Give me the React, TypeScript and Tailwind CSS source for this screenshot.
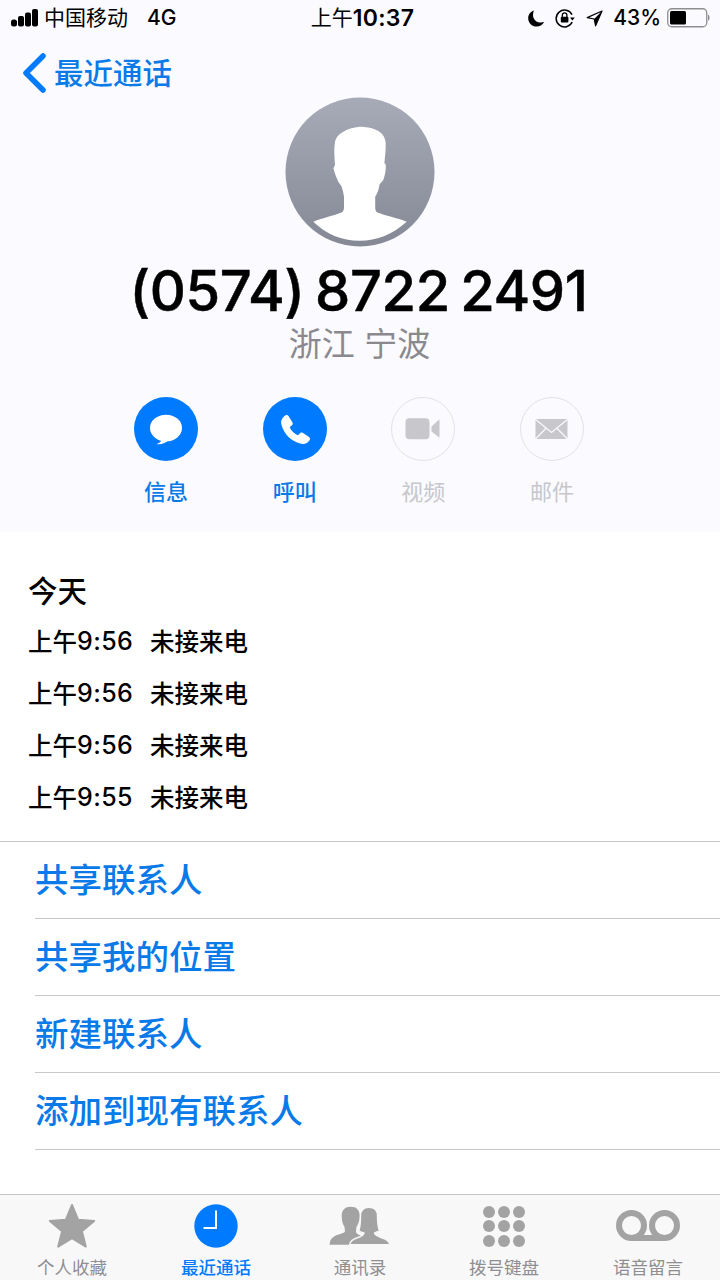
import React from "react";

const FONT = { fontFamily: '"Inter", "Noto Sans CJK SC", sans-serif' };

function Signal() {
  return (
    <svg width="28" height="18" viewBox="0 0 28 18" className="block">
      <rect x="0" y="10.5" width="6" height="7" rx="2.5" fill="#000" />
      <rect x="7" y="7" width="6" height="10.5" rx="2" fill="#000" />
      <rect x="14" y="3.5" width="6" height="14" rx="2" fill="#000" />
      <rect x="21" y="0" width="6" height="17.5" rx="2" fill="#000" />
    </svg>
  );
}

function Moon() {
  return (
    <svg width="17" height="17" viewBox="0 0 17 17" className="block">
      <path d="M6 0.5 C2.4 1.6 0.2 4.6 0.2 8.2 C0.2 12.9 4 16.6 8.6 16.6 C12 16.6 14.8 14.7 16.2 11.8 C15.2 12.3 14 12.6 12.8 12.6 C8.6 12.6 5 9.2 5 4.9 C5 3.2 5.3 1.8 6 0.5 Z" fill="#000" />
    </svg>
  );
}

function RotationLock() {
  return (
    <svg width="20" height="20" viewBox="0 0 20 20" className="block">
      <path d="M17 6.6 A8.4 8.4 0 1 0 17.2 14" fill="none" stroke="#000" strokeWidth="1.5" />
      <path d="M15 9.4 L19.8 9.4 L17.4 12.4 Z" fill="#000" />
      <rect x="5.8" y="8.8" width="7.6" height="5.8" rx="1" fill="#000" />
      <path d="M7.3 9 V7.2 A2.3 2.3 0 0 1 11.9 7.2 V9" fill="none" stroke="#000" strokeWidth="1.3" />
    </svg>
  );
}

function LocationArrow() {
  return (
    <svg width="17" height="17" viewBox="0 0 17 17" className="block">
      <path d="M16 1 L1.2 7.6 L8.2 9 L9.6 15.8 Z" fill="none" stroke="#000" strokeWidth="1.2" strokeLinejoin="round" />
      <path d="M16 1 L8.2 9 L9.6 15.8 Z" fill="#000" />
    </svg>
  );
}

function Battery() {
  return (
    <svg width="43" height="20" viewBox="0 0 43 20" className="block">
      <rect x="0.75" y="0.75" width="39" height="18" rx="4" fill="none" stroke="#8e8e8e" strokeWidth="1.3" />
      <rect x="3" y="3" width="16" height="13.6" rx="1.5" fill="#000" />
      <path d="M41 6.5 C42 7 42.6 8.5 42.6 9.8 C42.6 11 42 12.4 41 13 Z" fill="#8e8e8e" />
    </svg>
  );
}

function Avatar() {
  return (
    <svg width="150" height="150" viewBox="0 0 150 150" className="block">
      <defs>
        <linearGradient id="av" x1="0" y1="0" x2="0" y2="1">
          <stop offset="0" stopColor="#a7abb8" />
          <stop offset="1" stopColor="#858995" />
        </linearGradient>
      </defs>
      <circle cx="75" cy="75" r="74.5" fill="url(#av)" />
      <path
        d="M74.5 29.7 C86 30 100 33 100.7 46 C100.9 53 100 60 99.4 66 L100.9 68 C100.9 74 99.8 79 98.3 83 L94.5 87.5 C94 92 92.5 96.5 90.2 99.7 L90.2 110 C90.2 113 90.8 114.5 92.5 115.5 C100 118.5 112 121 121.7 124.7 C108 137 92 143.8 74.5 143.8 C57 143.8 41 137 28.3 124.7 C38 121 49 118.5 56.5 115.5 C58.3 114.5 59 113 59 110 L59 99.7 C58.5 96 57.5 92.5 56.7 89.7 L53.3 84.7 C51.5 80.5 49.5 76 48.4 71.3 L50 68 C49.5 60 48.7 52 50 45 C51 37 62 31 74.5 29.7 Z"
        fill="#fff"
      />
    </svg>
  );
}

function Action({ label, active, children }: { label: string; active: boolean; children: React.ReactNode }) {
  return (
    <div className="flex w-[128.7px] flex-col items-center">
      <div
        className={
          active
            ? "h-16 w-16 rounded-full bg-[#007aff]"
            : "h-16 w-16 rounded-full border-[1.5px] border-[#e2e2e8]"
        }
      >
        {children}
      </div>
      <div
        className={
          active
            ? "mt-[13px] h-[36px] text-[22px] leading-[36px] font-medium text-[#0a7ae8]"
            : "mt-[13px] h-[36px] text-[22px] leading-[36px] text-[#c7c7cc]"
        }
      >
        {label}
      </div>
    </div>
  );
}

function MessageIcon() {
  return (
    <svg width="64" height="64" viewBox="0 0 64 64" className="block">
      <ellipse cx="32" cy="31" rx="16" ry="13.3" fill="#fff" />
      <path d="M28 42 C28 44 25 46.5 22.5 47 C26 48 31 46.5 34.5 43.5 Z" fill="#fff" />
    </svg>
  );
}

function PhoneIcon() {
  return (
    <svg width="64" height="64" viewBox="0 0 64 64" className="block">
      <path
        d="M21 19.5 C22.5 18 24.5 17.5 25.5 19 L29.5 25.5 C30.2 27 29.5 28 28 29 L26.8 30 C27.5 33 32 37.5 35 38.3 L36.2 37 C37.3 35.6 38.5 35 40 36 L46 40 C47.5 41 47.2 42.8 46 44 C44 46.5 41 47.5 37 46.5 C28 44 21 37 18.5 28 C17.5 24.5 18.5 21.5 21 19.5 Z"
        fill="#fff"
      />
    </svg>
  );
}

function VideoIcon() {
  return (
    <svg width="61" height="61" viewBox="1.5 1.5 61 61" className="block">
      <rect x="15" y="21.7" width="24" height="21" rx="4" fill="#c7c7cc" />
      <path d="M41 30 L49 22.7 V41.3 L41 35 Z" fill="#c7c7cc" />
    </svg>
  );
}

function MailIcon() {
  return (
    <svg width="61" height="61" viewBox="1.5 1.5 61 61" className="block">
      <rect x="16" y="22.5" width="32" height="20" fill="#c7c7cc" />
      <path d="M15.5 22.5 L32 36 L48.5 22.5 M15.5 43 L26.8 31.5 M48.5 43 L37.2 31.5" fill="none" stroke="#fafaff" strokeWidth="1.2" />
    </svg>
  );
}

function CallRow({ time }: { time: string }) {
  return (
    <div className="flex h-[52px] items-center text-[24.5px] font-medium text-black">
      <span className="flex w-[122px] items-center">
        <span>上午</span>
        <span className="text-[25px] tracking-[0.4px]">{time}</span>
      </span>
      <span>未接来电</span>
    </div>
  );
}

function ActionRow({ label }: { label: string }) {
  return (
    <div className="ml-[35px] border-b border-[#c8c7cc]">
      <div className="flex h-[76px] items-center text-[33.5px] font-medium text-[#0a7ae8]">{label}</div>
    </div>
  );
}

function StarIcon() {
  return (
    <svg width="48" height="46" viewBox="0 0 48 46" className="block">
      <path
        d="M24 2 L30.2 16.8 L46.2 17.9 L33.9 28.2 L37.8 43.6 L24 35.2 L10.2 43.6 L14.1 28.2 L1.8 17.9 L17.8 16.8 Z"
        fill="#a3a3a3"
        stroke="#a3a3a3"
        strokeWidth="2"
        strokeLinejoin="round"
      />
    </svg>
  );
}

function ClockIcon() {
  return (
    <svg width="44" height="44" viewBox="0 0 44 44" className="block">
      <circle cx="22" cy="22" r="21.7" fill="#007aff" />
      <path d="M22 6.5 V24 H9.5" fill="none" stroke="#fff" strokeWidth="2" />
    </svg>
  );
}

function ContactsIcon() {
  return (
    <svg width="62" height="42" viewBox="0 0 62 42" className="block">
      <path
        d="M21.7 1.7 C27.5 1.7 30.7 5 30.7 11 C30.7 15 29.5 19 27.5 22 L27 26 C27 28 28 29 32 30.5 L38 33 L20 39.7 L0.7 39.7 C0.7 35 3 32 8 30 C13 28.3 16 28 16 26 L15.5 22 C13.5 19 12.7 15 12.7 11 C12.7 5 16 1.7 21.7 1.7 Z"
        fill="#a3a3a3"
      />
      <path
        d="M40 2.3 C46 2.3 48.5 6 48.5 11 C48.5 16 49 22 50.5 26 C48 27 46 27.5 45.5 28 C45.5 30 48 31 52 32.5 C57 34 60.5 36 60.7 39.7 L20.7 39.7 C21 36 24 34 29 32.5 C33 31 35 30 35 28 C33.5 27.5 31.5 27 29.8 26 C31 22 31.5 16 31.5 11 C31.5 6 34 2.3 40 2.3 Z"
        fill="#a3a3a3"
        stroke="#f8f8f8"
        strokeWidth="1.4"
      />
    </svg>
  );
}

function KeypadIcon() {
  const dots: number[] = [0, 1, 2, 3, 4, 5, 6, 7, 8];
  return (
    <div className="grid w-[42px] grid-cols-3 gap-[2.5px]">
      {dots.map((d) => (
        <div key={d} className="h-3 w-3 rounded-full bg-[#a3a3a3]" />
      ))}
    </div>
  );
}

function VoicemailIcon() {
  return (
    <svg width="64" height="32" viewBox="0 0 64 32" className="block">
      <circle cx="15.5" cy="15.5" r="12.5" fill="none" stroke="#a3a3a3" strokeWidth="6" />
      <circle cx="48.5" cy="15.5" r="12.5" fill="none" stroke="#a3a3a3" strokeWidth="6" />
      <path d="M15.5 28 H48.5" stroke="#a3a3a3" strokeWidth="6" />
    </svg>
  );
}

function Tab({ label, active, children }: { label: string; active?: boolean; children: React.ReactNode }) {
  return (
    <div className="flex flex-col items-center">
      <div className="flex h-[46px] items-center justify-center">{children}</div>
      <div
        className={
          active
            ? "mt-[6px] text-[17.5px] leading-[26px] font-medium text-[#007aff]"
            : "mt-[6px] text-[17.5px] leading-[26px] text-[#8e8e93]"
        }
      >
        {label}
      </div>
    </div>
  );
}

export default function App() {
  return (
    <div className="flex h-[1280px] w-[720px] flex-col overflow-hidden bg-white" style={FONT}>
      <div className="h-[532px] bg-[#fafaff]">
        <div className="flex h-[36px] items-center text-[21px] text-black">
          <div className="flex flex-1 items-center pl-[11px]">
            <Signal />
            <span className="ml-[5px]">中国移动</span>
            <span className="ml-[19px] font-medium">4G</span>
          </div>
          <div className="ml-[4px] flex items-center">
            <span>上午</span>
            <span className="text-[23px] font-semibold tracking-[0.3px]">10:37</span>
          </div>
          <div className="flex flex-1 items-center justify-end pr-[10px]">
            <Moon />
            <span className="ml-[10px]"><RotationLock /></span>
            <span className="ml-[11px]"><LocationArrow /></span>
            <span className="ml-[10px] font-medium">43%</span>
            <span className="ml-[6px]"><Battery /></span>
          </div>
        </div>
        <div className="flex h-[76px] items-center pl-[22px] pb-[2px]">
          <svg width="26" height="40" viewBox="0 0 26 40" className="block">
            <path d="M21 3 L4 20 L21 37" fill="none" stroke="#007aff" strokeWidth="5.5" strokeLinecap="round" strokeLinejoin="round" />
          </svg>
          <span className="ml-[6px] text-[29.5px] font-medium text-[#0a7ae8]">最近通话</span>
        </div>
        <div className="flex flex-col items-center">
          <div className="-mt-[15px]">
            <Avatar />
          </div>
          <div className="mt-[11px] mr-[3px] h-[66px] text-[56px] leading-[66px] font-medium tracking-[-0.4px] [word-spacing:-4px] [-webkit-text-stroke:0.5px_black] text-black">
            (0574) 8722 2491
          </div>
          <div className="-mt-[3px] mr-[1px] h-[46px] text-[33px] leading-[46px] text-[#8a8a8e]">浙江 宁波</div>
        </div>
        <div className="mt-[30px] flex justify-center pr-[2px]">
          <Action label="信息" active><MessageIcon /></Action>
          <Action label="呼叫" active><PhoneIcon /></Action>
          <Action label="视频" active={false}><VideoIcon /></Action>
          <Action label="邮件" active={false}><MailIcon /></Action>
        </div>
      </div>

      <div className="flex-1">
        <div className="pt-[38px] pl-[28px] pb-[17px]">
          <div className="mb-[4px] h-[42px] text-[29.5px] leading-[42px] font-medium text-black">今天</div>
          <CallRow time="9:56" />
          <CallRow time="9:56" />
          <CallRow time="9:56" />
          <CallRow time="9:55" />
        </div>
        <div className="border-t border-[#c8c7cc]">
          <ActionRow label="共享联系人" />
          <ActionRow label="共享我的位置" />
          <ActionRow label="新建联系人" />
          <ActionRow label="添加到现有联系人" />
        </div>
      </div>

      <div className="grid h-[86px] grid-cols-5 border-t border-[#c4c4c6] bg-[#f8f8f8] pt-[8px]">
        <Tab label="个人收藏"><StarIcon /></Tab>
        <Tab label="最近通话" active><ClockIcon /></Tab>
        <Tab label="通讯录"><ContactsIcon /></Tab>
        <Tab label="拨号键盘"><KeypadIcon /></Tab>
        <Tab label="语音留言"><VoicemailIcon /></Tab>
      </div>
    </div>
  );
}
